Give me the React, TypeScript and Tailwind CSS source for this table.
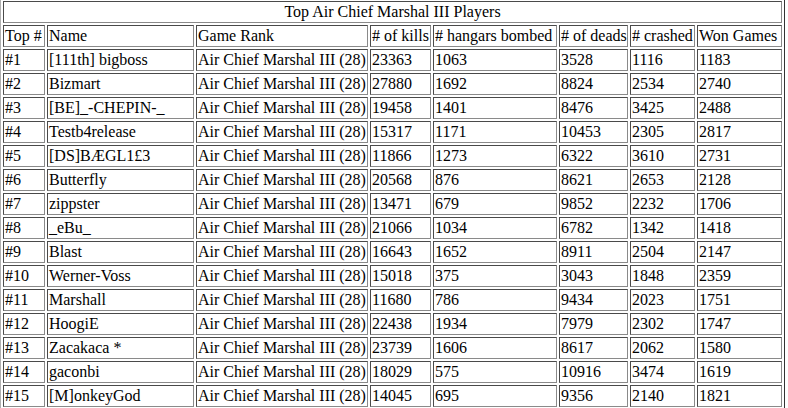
import React from 'react'

const rows: [string, string, number, number, number, number, number][] = [
  ['#1', '[111th] bigboss', 23363, 1063, 3528, 1116, 1183],
  ['#2', 'Bizmart', 27880, 1692, 8824, 2534, 2740],
  ['#3', '[BE]_-CHEPIN-_', 19458, 1401, 8476, 3425, 2488],
  ['#4', 'Testb4release', 15317, 1171, 10453, 2305, 2817],
  ['#5', '[DS]BÆGL1£3', 11866, 1273, 6322, 3610, 2731],
  ['#6', 'Butterfly', 20568, 876, 8621, 2653, 2128],
  ['#7', 'zippster', 13471, 679, 9852, 2232, 1706],
  ['#8', '_eBu_', 21066, 1034, 6782, 1342, 1418],
  ['#9', 'Blast', 16643, 1652, 8911, 2504, 2147],
  ['#10', 'Werner-Voss', 15018, 375, 3043, 1848, 2359],
  ['#11', 'Marshall', 11680, 786, 9434, 2023, 1751],
  ['#12', 'HoogiE', 22438, 1934, 7979, 2302, 1747],
  ['#13', 'Zacakaca *', 23739, 1606, 8617, 2062, 1580],
  ['#14', 'gaconbi', 18029, 575, 10916, 3474, 1619],
  ['#15', '[M]onkeyGod', 14045, 695, 9356, 2140, 1821],
]

const cell =
  'border border-t-[#4a4a4a] border-l-[#4a4a4a] border-b-[#8a8a8a] border-r-[#8a8a8a] p-[1px] text-left font-normal align-middle whitespace-nowrap overflow-hidden'

const App = () => {
  return (
    <div className="bg-white w-[788px] h-[408px] overflow-hidden text-black text-[16px] leading-[normal]" style={{ fontFamily: '"Liberation Serif", "Times New Roman", serif' }}>
      <table className="table-fixed w-[785px] -mt-[2px] border-separate border-spacing-[2px] border border-t-[#b0b0b0] border-l-[#b0b0b0] border-b-[#333] border-r-[#333]">
        <colgroup>
          <col className="w-[42px]" />
          <col className="w-[147px]" />
          <col className="w-[172px]" />
          <col className="w-[61px]" />
          <col className="w-[124px]" />
          <col className="w-[69px]" />
          <col className="w-[65px]" />
          <col className="w-[85px]" />
        </colgroup>
        <tbody>
          <tr>
            <td colSpan={8} className={cell + ' !text-center'}>Top Air Chief Marshal III Players</td>
          </tr>
          <tr>
            <td className={cell}>Top #</td>
            <td className={cell}>Name</td>
            <td className={cell}>Game Rank</td>
            <td className={cell}># of kills</td>
            <td className={cell}># hangars bombed</td>
            <td className={cell}># of deads</td>
            <td className={cell}># crashed</td>
            <td className={cell}>Won Games</td>
          </tr>
          {rows.map((r) => (
            <tr key={r[0]}>
              <td className={cell}>{r[0]}</td>
              <td className={cell}>{r[1]}</td>
              <td className={cell}>Air Chief Marshal III (28)</td>
              <td className={cell}>{r[2]}</td>
              <td className={cell}>{r[3]}</td>
              <td className={cell}>{r[4]}</td>
              <td className={cell}>{r[5]}</td>
              <td className={cell}>{r[6]}</td>
            </tr>
          ))}
        </tbody>
      </table>
    </div>
  )
}

export default App
